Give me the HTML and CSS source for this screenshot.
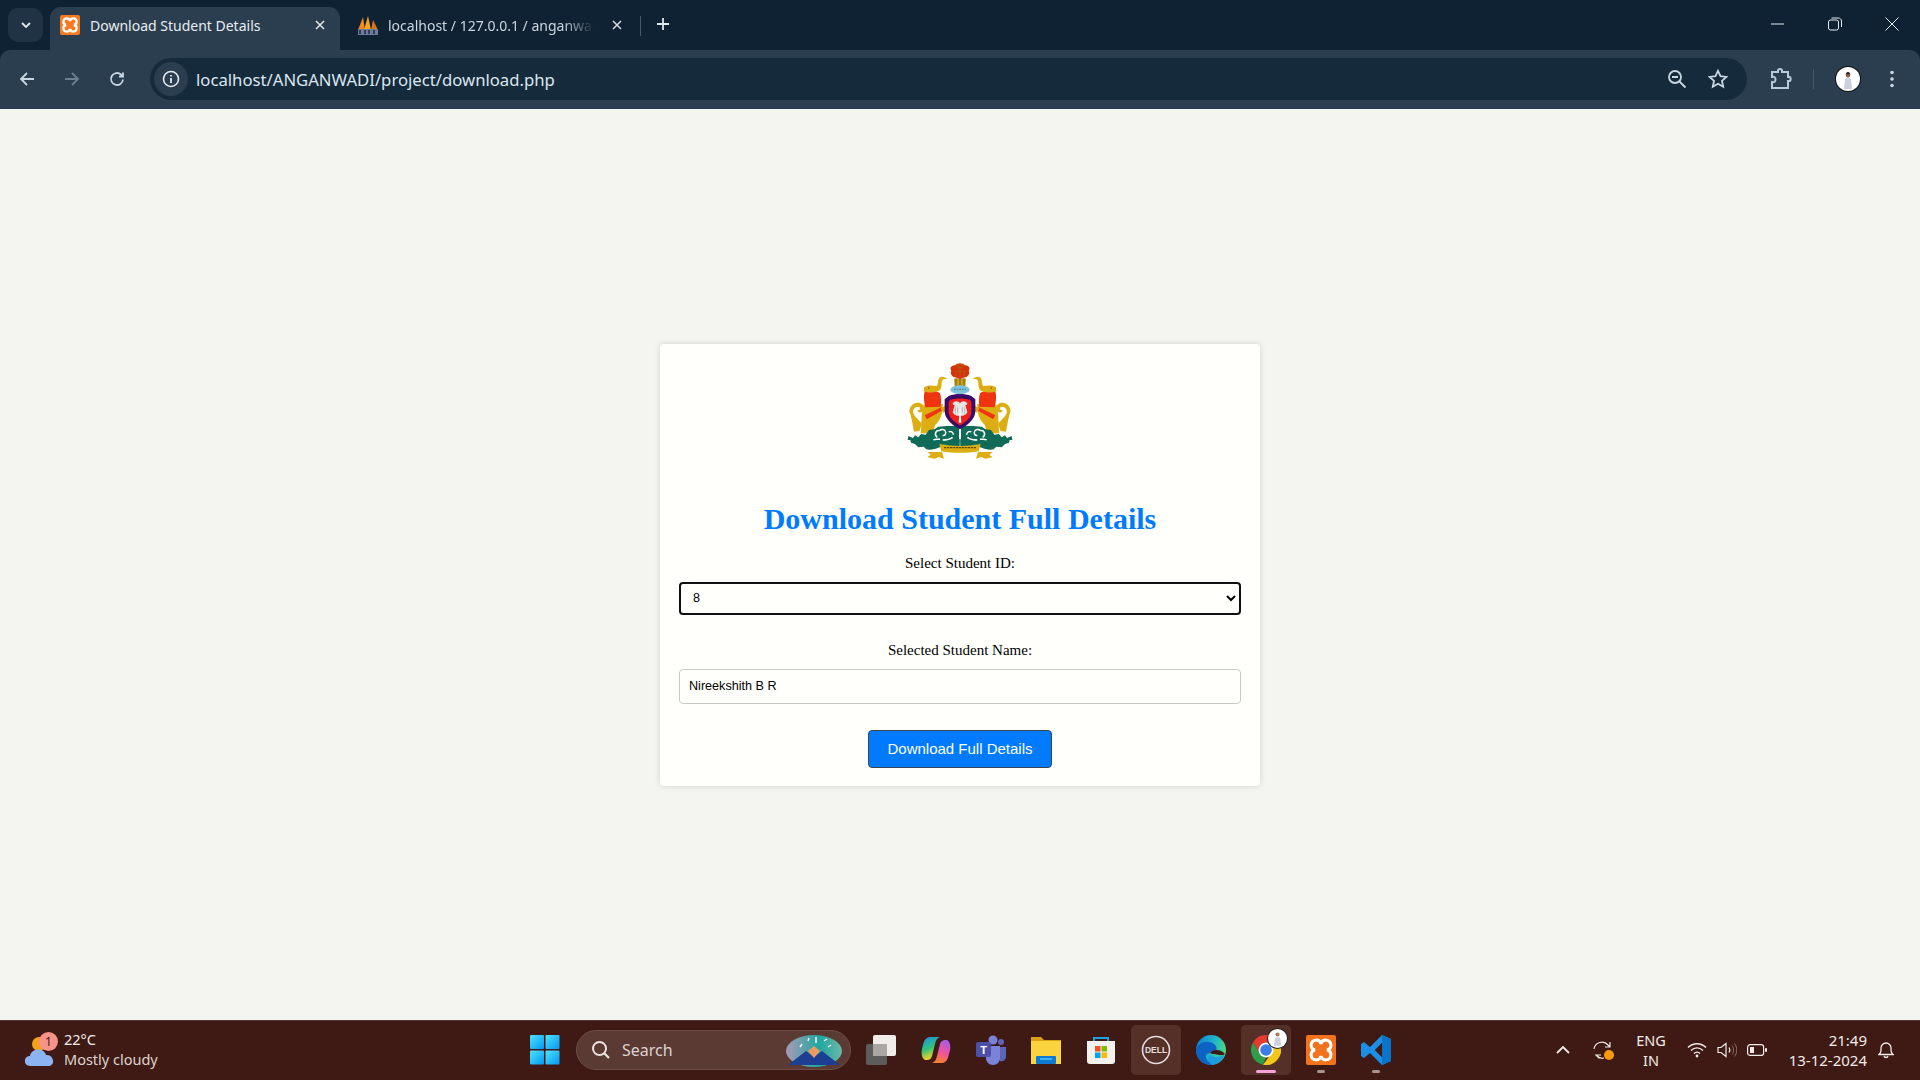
FILE: index.html
```html
<!DOCTYPE html>
<html lang="en">
<head>
    <meta charset="UTF-8">
    <meta name="viewport" content="width=device-width, initial-scale=1.0">
    <title>Download Student Details</title>
    <link rel="stylesheet" href="styles.css">
</head>
<body>
    <header id="browser">
        <div class="tabstrip">
            <button class="tab-search" type="button">
                <svg width="12" height="12" viewBox="0 0 12 12"><path d="M2 4l4 4 4-4" fill="none" stroke="#dfe6ec" stroke-width="1.8"/></svg>
            </button>
            <div class="tab tab-active">
                <svg class="favicon" viewBox="0 0 30 30">
                    <rect width="30" height="30" rx="3" fill="#fb7a1e"/>
                    <path d="M15 9A5 5 0 1 1 21 15A5 5 0 1 1 15 21A5 5 0 1 1 9 15A5 5 0 1 1 15 9z" fill="none" stroke="#fff" stroke-width="3.500"/>
                </svg>
                <span class="tab-title">Download Student Details</span>
                <svg class="tab-close" viewBox="0 0 10 10"><path d="M1 1l8 8M9 1l-8 8" stroke="#e6ebef" stroke-width="1.500"/></svg>
            </div>
            <div class="tab tab-other">
                <svg class="favicon" viewBox="0 0 20 20">
                    <path d="M0 15L5 2l2 13z" fill="#f08a1d"/>
                    <path d="M6 15L10 1l3 14z" fill="#f6a623"/>
                    <path d="M13 15L15 5l5 10z" fill="#d9761a"/>
                    <rect y="14" width="20" height="6" fill="#6d7a99"/>
                    <path d="M2 15v4M7 15v4M11 15v4M16 15v4" stroke="#1d2a44" stroke-width="1.500"/>
                </svg>
                <span class="tab-title tab-title-fade">localhost / 127.0.0.1 / anganwadi</span>
                <svg class="tab-close" viewBox="0 0 10 10"><path d="M1 1l8 8M9 1l-8 8" stroke="#d5dde3" stroke-width="1.500"/></svg>
            </div>
            <span class="tab-sep"></span>
            <svg class="new-tab" viewBox="0 0 14 14"><path d="M7 1v12M1 7h12" stroke="#dfe6ec" stroke-width="1.800"/></svg>
            <div class="window-controls">
                <svg viewBox="0 0 14 14"><path d="M0 7h13" stroke="#e6ebef" stroke-width="1"/></svg>
                <svg viewBox="0 0 14 14"><rect x=".5" y="3" width="10" height="10" rx="2" fill="none" stroke="#e6ebef"/><path d="M3.500 1h7c1.500 0 3 1.500 3 3v6" fill="none" stroke="#e6ebef"/></svg>
                <svg viewBox="0 0 14 14"><path d="M.5.500l13 13M13.500.500l-13 13" stroke="#e6ebef" stroke-width="1"/></svg>
            </div>
        </div>
        <div class="toolbar">
            <svg class="nav-icon" viewBox="0 0 18 18"><path d="M16 9H3M9 3L3 9l6 6" fill="none" stroke="#c8d6e2" stroke-width="1.800"/></svg>
            <svg class="nav-icon" viewBox="0 0 18 18"><path d="M2 9h13M9 3l6 6-6 6" fill="none" stroke="#6c7f8e" stroke-width="1.800"/></svg>
            <svg class="nav-icon" viewBox="0 0 18 18"><path d="M15 9.500A6 6 0 1 1 13 4.500L15 6.500M15 2.500v4h-4" fill="none" stroke="#c8d6e2" stroke-width="1.800"/></svg>
            <div class="omnibox">
                <span class="site-info">
                    <svg width="18" height="18" viewBox="0 0 18 18"><circle cx="9" cy="9" r="7.500" fill="none" stroke="#e3e9ee" stroke-width="1.600"/><path d="M9 8v5M9 5v1.600" stroke="#e3e9ee" stroke-width="1.800"/></svg>
                </span>
                <span class="url">localhost/ANGANWADI/project/download.php</span>
                <svg class="omni-icon omni-zoom" viewBox="0 0 20 20"><circle cx="8" cy="8" r="6" fill="none" stroke="#c8d6e2" stroke-width="1.800"/><path d="M5 8h6M12.500 12.500l6 6" stroke="#c8d6e2" stroke-width="1.800"/></svg>
                <svg class="omni-icon omni-star" viewBox="0 0 20 20"><path d="M10 1.800l2.500 5.400 5.900.7-4.400 4 1.200 5.800-5.200-2.900-5.200 2.900 1.200-5.800-4.400-4 5.900-.7z" fill="none" stroke="#c8d6e2" stroke-width="1.800"/></svg>
            </div>
            <svg class="ext-icon" viewBox="0 0 22 22"><path d="M2 4h6V2.500c0-2 4-2 4 0V4h6v5h1.500c1.500 0 1.500 4 0 4H18v7H2v-6c2.500.5 3.500-.5 3.500-2.500S4.500 8.500 2 9z" fill="none" stroke="#b4cadd" stroke-width="2"/></svg>
            <span class="toolbar-sep"></span>
            <span class="avatar">
                <svg viewBox="0 0 24 24"><circle cx="12" cy="8" r="2.400" fill="#8a5a40"/><path d="M9.800 7c0-2.400 4.400-2.400 4.400 0z" fill="#1e1a1a"/><path d="M8 22l1-10c1-1.500 5-1.500 6 0l1 10z" fill="#c9d2dc"/></svg>
            </span>
            <svg class="menu-icon" viewBox="0 0 4 18"><circle cx="2" cy="2.500" r="1.800" fill="#c8d6e2"/><circle cx="2" cy="9" r="1.800" fill="#c8d6e2"/><circle cx="2" cy="15.500" r="1.800" fill="#c8d6e2"/></svg>
        </div>
    </header>

    <main id="page">
        <div id="container">
            <svg class="emblem" viewBox="60 39 360 300">
                <defs>
                    <g id="emblemBeast">
                        <path d="M92 195c-12-20 8-42 28-36 12 4 14 18 6 26-6 5-14 2-14-5 6 2 10-2 8-7-8-8-24 2-20 16 4 12 18 22 26 32l-8 22-16 2c-4-20-6-34-10-50z" fill="#dcae12"/>
                        <path d="M130 166l58-4c2 20-4 48-22 62l-8 26h-36c4-30 0-56 8-84z" fill="#dcae12"/>
                        <path d="M134 124c18-4 38-2 46 6 4 12 4 26 2 40l-46 2c-4-14-6-34-2-48z" fill="#f03410"/>
                        <path d="M134 196l50-24 2 10-46 26z" fill="#f03410"/>
                        <path d="M132 112c10-8 26-6 38-4 6-6 2-18 8-24 6-6 18-4 24 4-6-2-14-2-16 4-2 10 0 22-8 30-14 6-32 8-46 2z" fill="#dcae12"/>
                        <circle cx="146" cy="114" r="2" fill="#6d4a0a"/>
                        <path d="M182 176c10-6 18-12 24-22l4 12-20 22z" fill="#dcae12"/>
                    </g>
                    <g id="emblemScroll">
                        <path d="M85 258l14 6 6-8 10 6 8-10 14 2 10-14 16-2 12-8 26-2 40 0-2 60c-22 6-40-2-56 2-18 6-30 12-44 8l-8-8-16 2-10-10-12-4-2-8-8 0z" fill="#0f6a58"/>
                        <path d="M172 262c-10-6-6-22 6-20M178 242c6-6 16-4 18 2M196 244c4 8-2 14-8 12M160 270c6-4 14-2 20-2M188 270c10 0 22-2 30-8M206 246c6-4 14 0 14 8" fill="none" stroke="#fffffb" stroke-width="4.500"/>
                        <path d="M142 306h44l6 20-16-5-12 5-22-4 10-8z" fill="#dcae12"/>
                    </g>
                </defs>
                <use href="#emblemBeast"/>
                <use href="#emblemBeast" transform="translate(480 0) scale(-1 1)"/>
                <use href="#emblemScroll"/>
                <use href="#emblemScroll" transform="translate(480 0) scale(-1 1)"/>
                <path d="M178 282c40 8 84 8 124 0l-6 22c-36 6-76 6-112 0z" fill="#dcae12"/>
                <path d="M192 293h96" stroke="#5d4a10" stroke-width="4" stroke-dasharray="7 2"/>
                <path d="M237 232h6v36h-6z" fill="#fffffb"/>
                <path d="M224 112l-2-26h36l-2 26z" fill="#c9a11c"/>
                <path d="M228 84v24M240 84v26M252 84v24" stroke="#7a5a12" stroke-width="3"/>
                <path d="M214 62c-8-10 4-18 12-16 2-8 26-8 28 0 8-2 20 6 12 16 6 8-4 22-14 20-6 6-18 6-24 0-10 2-20-12-14-20z" fill="#d9300c"/>
                <path d="M232 44h16v9h-16zM222 64h36M240 56v26M228 70v10M252 70v10" stroke="#a8660f" stroke-width="3" fill="none"/>
                <ellipse cx="240" cy="119" rx="29" ry="13" fill="#7fc3da"/>
                <path d="M222 118h36" stroke="#4c86a6" stroke-width="4" stroke-dasharray="5 3"/>
                <path d="M206 138c22-8 46-8 68 0l12 10v36c0 24-26 44-46 54-20-10-46-30-46-54v-36z" fill="#3a0b66"/>
                <path d="M210 150c18-6 42-6 60 0l4 6v30c0 18-20 32-34 40-14-8-34-22-34-40v-30z" fill="#ef1f1c"/>
                <path d="M240 160c-4-8-16-8-22 0 0 4 2 6 6 6l-6 20c4 10 14 14 22 10 8 4 18 0 22-10l-6-20c4 0 6-2 6-6-6-8-18-8-22 0z" fill="#e4e4e4"/>
                <path d="M240 160l-4 58h8z" fill="#fffffb"/>
                <path d="M226 172v18M254 172v18M233 172v16M247 172v16" stroke="#a8a8a8" stroke-width="2"/>
            </svg>
            <h2>Download Student Full Details</h2>
            <form id="downloadForm">
                <label for="studentId">Select Student ID:</label>
                <select id="studentId" name="studentId">
                    <option>8</option>
                </select>
                <label for="studentName">Selected Student Name:</label>
                <input id="studentName" name="studentName" type="text" value="Nireekshith B R" readonly>
                <button class="download-btn" type="submit">Download Full Details</button>
            </form>
        </div>
    </main>

    <footer id="taskbar">
        <div class="weather">
            <span class="weather-icon">
                <svg width="34" height="36" viewBox="0 0 34 36">
                    <circle cx="14" cy="12" r="7" fill="#f5a019"/>
                    <path d="M5 34c-7 0-7-10 0-10 1-8 14-9 16-1 8-1 10 11 2 11z" fill="#8db4f2"/>
                </svg>
                <span class="weather-badge">1</span>
            </span>
            <div class="weather-text">
                <span>22°C</span>
                <span class="weather-desc">Mostly cloudy</span>
            </div>
        </div>

        <svg class="win-logo" viewBox="0 0 30 30">
            <defs>
                <linearGradient id="winBlue" x1="0" y1="0" x2="1" y2="1"><stop offset="0" stop-color="#4fe3ff"/><stop offset="1" stop-color="#0597f2"/></linearGradient>
            </defs>
            <rect width="14" height="14" rx="1" fill="url(#winBlue)"/>
            <rect x="15.500" width="14" height="14" rx="1" fill="url(#winBlue)"/>
            <rect y="15.500" width="14" height="14" rx="1" fill="url(#winBlue)"/>
            <rect x="15.500" y="15.500" width="14" height="14" rx="1" fill="url(#winBlue)"/>
        </svg>

        <div class="search-pill">
            <svg width="20" height="20" viewBox="0 0 20 20"><circle cx="8.500" cy="8.500" r="6.500" fill="none" stroke="#e9e4e2" stroke-width="2"/><path d="M13 13l5 5" stroke="#e9e4e2" stroke-width="2.200"/></svg>
            <span class="search-label">Search</span>
            <svg class="search-art" width="56" height="34" viewBox="0 0 56 34">
                <defs>
                    <linearGradient id="artSky" x1="0" y1="0" x2="1" y2="0"><stop offset="0" stop-color="#a99ab8"/><stop offset=".6" stop-color="#1ea79f"/><stop offset="1" stop-color="#6fb7a9"/></linearGradient>
                </defs>
                <ellipse cx="28" cy="18" rx="28" ry="16" fill="url(#artSky)"/>
                <path d="M2 32l18-14 8 6 8-6 18 14z" fill="#1d3f92"/>
                <path d="M22 18l6-5 6 5-6 7z" fill="#ee9a62"/>
                <path d="M14 14l2-3M22 8l1-3M30 10V4M38 8l3-2M42 14l3-2" stroke="#f3f3f3" stroke-width="1.500"/>
            </svg>
        </div>

        <div class="task-icons">
            <span class="task-item">
                <svg viewBox="0 0 30 30"><rect y="9" width="21" height="21" rx="2" fill="#5d5c5b"/><rect x="7" y="0" width="23" height="21" rx="2" fill="#efece9"/><rect x="7" y="9" width="14" height="12" fill="#a9a6a4"/></svg>
            </span>
            <span class="task-item">
                <svg viewBox="0 0 30 30">
                    <defs>
                        <linearGradient id="copA" x1="0" y1="0" x2=".3" y2="1"><stop offset="0" stop-color="#1f8fe8"/><stop offset=".55" stop-color="#2fc27c"/><stop offset="1" stop-color="#f5d327"/></linearGradient>
                        <linearGradient id="copB" x1=".7" y1="0" x2=".4" y2="1"><stop offset="0" stop-color="#a85bea"/><stop offset=".55" stop-color="#f0559a"/><stop offset="1" stop-color="#f5822a"/></linearGradient>
                    </defs>
                    <path d="M9 2h10c-3 1-4 3-5 7l-3 12c-1 3-3 4-5 4H4C0 23 0 16 2 10 3 6 5 2 9 2z" fill="url(#copA)"/>
                    <path d="M21 28H11c3-1 4-3 5-7l3-12c1-3 3-4 5-4h2c4 2 4 9 2 14-1 5-3 9-7 9z" fill="url(#copB)"/>
                </svg>
            </span>
            <span class="task-item">
                <svg viewBox="0 0 30 30">
                    <circle cx="17" cy="5" r="4.500" fill="#7b83d8"/>
                    <circle cx="25" cy="7" r="3" fill="#5e65b8"/>
                    <path d="M21 12h9v9c0 4-3 6-6 5z" fill="#5e65b8"/>
                    <path d="M10 11h14v12c0 4-3 7-7 7s-7-3-7-7z" fill="#7b83d8"/>
                    <rect y="7" width="15" height="15" rx="2" fill="#4b4fa8"/>
                    <text class="teams-t" x="7.500" y="19">T</text>
                </svg>
            </span>
            <span class="task-item">
                <svg viewBox="0 0 30 30">
                    <path d="M0 2h10l3 3h17v8H0z" fill="#d9a213"/>
                    <rect y="6" width="30" height="23" fill="#fbd33f"/>
                    <rect x="5" y="21" width="20" height="8" rx="1" fill="#0f7ad1"/>
                    <rect x="9" y="23" width="12" height="2" fill="#41b2f0"/>
                </svg>
            </span>
            <span class="task-item">
                <svg viewBox="0 0 30 30">
                    <path d="M8 9V3h14v6" fill="none" stroke="#1aa3e4" stroke-width="2"/>
                    <path d="M1 6h28v20c0 2-1 3-3 3H4c-2 0-3-1-3-3z" fill="#f3f1ee"/>
                    <rect x="9" y="11" width="5.500" height="5.500" fill="#f25022"/>
                    <rect x="15.500" y="11" width="5.500" height="5.500" fill="#7fba00"/>
                    <rect x="9" y="17.500" width="5.500" height="5.500" fill="#00a4ef"/>
                    <rect x="15.500" y="17.500" width="5.500" height="5.500" fill="#ffb900"/>
                </svg>
            </span>
            <span class="task-item task-tile">
                <svg viewBox="0 0 30 30">
                    <circle cx="15" cy="15" r="13.500" fill="none" stroke="#e4dedb" stroke-width="1.600"/>
                    <text class="dell-text" x="15" y="18">DELL</text>
                </svg>
            </span>
            <span class="task-item">
                <svg viewBox="0 0 30 30">
                    <defs>
                        <linearGradient id="edgeG" x1="0" y1=".2" x2="1" y2=".5"><stop offset="0" stop-color="#0f7fd6"/><stop offset=".55" stop-color="#1fb4c8"/><stop offset="1" stop-color="#4cdc7e"/></linearGradient>
                    </defs>
                    <circle cx="15" cy="15" r="15" fill="url(#edgeG)"/>
                    <path d="M0 15c1-6 7-9 13-8 6 1 9 5 7 9-3 2-8 1-10 4-1 3 2 7 6 9 2 1-1 1-2 1C6 29 0 23 0 15z" fill="#0d63c4"/>
                    <path d="M14 18c3-4 11-4 15 1-3 2-7 1-10 0-2 0-3 0-5-1z" fill="#3f1a14"/>
                    <path d="M14 20c3 3 9 3 15-1-2 6-7 10-13 11-4-3-4-7-2-10z" fill="#1c9be0"/>
                </svg>
            </span>
            <span class="task-item task-tile task-chrome">
                <svg viewBox="0 0 30 30">
                    <path d="M28 7.500A15 15 0 0 1 12 29.700L19 20.500A7 7 0 0 0 21 11z" fill="#f5c518"/>
                    <path d="M2 7.500L9 18.500A7.500 7.500 0 0 0 15 22.500L12 29.700A15 15 0 0 1 2 7.500z" fill="#2f9e48"/>
                    <path d="M2 7.500A15 15 0 0 1 28 7.500H15A7.500 7.500 0 0 0 8.500 11.250L9 18.500z" fill="#e53a30"/>
                    <circle cx="15" cy="15" r="7.500" fill="#fff"/>
                    <circle cx="15" cy="15" r="5.800" fill="#3b7de8"/>
                </svg>
                <span class="chrome-avatar">
                    <svg viewBox="0 0 24 24"><circle cx="12" cy="7" r="2.600" fill="#a87a5e"/><path d="M7.500 21l1-9c1-2 6-2 7 0l1 9z" fill="#c9d2dc"/></svg>
                </span>
                <span class="indicator indicator-active"></span>
            </span>
            <span class="task-item">
                <svg viewBox="0 0 30 30">
                    <rect width="30" height="30" rx="2" fill="#f2731c"/>
                    <path d="M15 9A5 5 0 1 1 21 15A5 5 0 1 1 15 21A5 5 0 1 1 9 15A5 5 0 1 1 15 9z" fill="none" stroke="#fff" stroke-width="3"/>
                </svg>
                <span class="indicator"></span>
            </span>
            <span class="task-item">
                <svg viewBox="0 0 30 30">
                    <path d="M21 0l9 4v22l-9 4-12-12-6 5-3-2v-12l3-2 6 5zM21 8l-7 7 7 7z" fill="#1b8ee6"/>
                    <path d="M21 0l9 4v22l-9 4z" fill="#0b73c9"/>
                    <path d="M21 8l-7 7 7 7z" fill="#3f1a14"/>
                </svg>
                <span class="indicator"></span>
            </span>
        </div>

        <div class="tray">
            <svg class="tray-chevron" viewBox="0 0 14 8"><path d="M1 7l6-6 6 6" fill="none" stroke="#f1ece9" stroke-width="1.800"/></svg>
            <span class="tray-sync">
                <svg width="20" height="20" viewBox="0 0 20 20"><path d="M1 9a8 8 0 0 1 14-4l2 2M17 2v5h-5M6 18l-3-3h5M3 15c3 3 5 4 8 3" fill="none" stroke="#efe9e6" stroke-width="1.200"/></svg>
                <span class="sync-dot"></span>
            </span>
            <div class="lang"><span>ENG</span><span>IN</span></div>
            <svg class="tray-icon" viewBox="0 0 20 16"><path d="M1 5.500c5-5 13-5 18 0M4 8.500c3.500-3.500 8.500-3.500 12 0M7 11.500c1.800-1.800 4.200-1.800 6 0" fill="none" stroke="#f1ece9" stroke-width="1.400"/><circle cx="10" cy="14" r="1.400" fill="#f1ece9"/></svg>
            <svg class="tray-icon" viewBox="0 0 20 16"><path d="M1 5.500h3L9 1.500v13l-5-4H1z" fill="none" stroke="#f1ece9" stroke-width="1.200"/><path d="M12 5.500c1 1.500 1 3.500 0 5" fill="none" stroke="#f1ece9" stroke-width="1.200"/><path d="M15 3.500c2 2.500 2 6.500 0 9M17.500 1.500c3 3.500 3 9.500 0 13" fill="none" stroke="#8c726a" stroke-width="1"/></svg>
            <svg class="tray-icon" viewBox="0 0 20 12"><rect x=".6" y=".6" width="16" height="10.800" rx="2.500" fill="none" stroke="#f1ece9" stroke-width="1.200"/><rect x="3" y="3" width="4" height="6" fill="#f1ece9"/><rect x="18" y="4" width="2" height="4" rx="1" fill="#f1ece9"/></svg>
            <div class="clock"><span>21:49</span><span>13-12-2024</span></div>
            <svg class="tray-bell" viewBox="0 0 16 18"><path d="M1 13.500c1-1 2-2 2-4V7a5 5 0 0 1 10 0v2.500c0 2 1 3 2 4z" fill="none" stroke="#f1ece9" stroke-width="1.300"/><path d="M6 15c.5 2 3.500 2 4 0" fill="none" stroke="#f1ece9" stroke-width="1.300"/></svg>
        </div>
    </footer>
</body>
</html>
```

FILE: styles.css
```css
* {
    box-sizing: border-box;
}

html, body {
    height: 100%;
}

body {
    margin: 0;
    display: flex;
    flex-direction: column;
    height: 100vh;
    overflow: hidden;
    background-color: #f4f4f0;
    font-family: "Liberation Serif", "Times New Roman", serif;
}

svg {
    display: block;
    flex-shrink: 0;
}

/* browser chrome */
#browser {
    background-color: #0f2233;
    font-family: "Noto Sans", "Open Sans", sans-serif;
}

.tabstrip {
    display: flex;
    align-items: flex-end;
    height: 50px;
    padding-left: 8px;
}

.tab-search {
    display: flex;
    align-items: center;
    justify-content: center;
    width: 35px;
    height: 34px;
    margin-bottom: 8px;
    margin-right: 7px;
    padding: 0;
    border: none;
    border-radius: 10px;
    background-color: #1f3344;
}

.tab {
    display: flex;
    align-items: center;
    height: 43px;
    padding-bottom: 7px;
    font-size: 14px;
}

.tab-active {
    position: relative;
    width: 290px;
    padding-left: 10px;
    padding-right: 15px;
    border-radius: 11px 11px 0 0;
    background-color: #2b3e4f;
    color: #e8edf1;
}

.tab-other {
    width: 300px;
    padding-left: 18px;
    padding-right: 18px;
    color: #ccd6de;
}

.favicon {
    width: 20px;
    height: 20px;
    margin-right: 10px;
}

.tab-title {
    flex: 1;
    overflow: hidden;
    white-space: nowrap;
}

.tab-title-fade {
    -webkit-mask-image: linear-gradient(to right, #000 85%, transparent);
    mask-image: linear-gradient(to right, #000 85%, transparent);
}

.tab-close {
    width: 10px;
    height: 10px;
    margin-left: 18px;
}

.tab-sep {
    width: 1px;
    height: 20px;
    margin-bottom: 14px;
    background-color: #46586a;
}

.new-tab {
    width: 14px;
    height: 14px;
    margin-left: 15px;
    margin-bottom: 19px;
}

.window-controls {
    display: flex;
    gap: 43px;
    margin-left: auto;
    margin-right: 21px;
    margin-bottom: 19px;
}

.window-controls svg {
    width: 14px;
    height: 14px;
}

.toolbar {
    display: flex;
    align-items: center;
    height: 59px;
    padding: 0 18px 1px 18px;
    border-radius: 10px 10px 0 0;
    background-color: #2b3e4f;
}

.nav-icon {
    width: 18px;
    height: 18px;
    margin-right: 27px;
}

.nav-icon:nth-child(3) {
    margin-right: 24px;
}

.omnibox {
    display: flex;
    align-items: center;
    width: 1597px;
    height: 42px;
    padding-left: 4px;
    border-radius: 21px;
    background-color: #152a3b;
}

.site-info {
    display: flex;
    align-items: center;
    justify-content: center;
    width: 34px;
    height: 34px;
    border-radius: 50%;
    background-color: #2b3e4f;
}

.url {
    margin-left: 8px;
    font-size: 16.700px;
    color: #dbe6ef;
}

.omni-icon {
    width: 20px;
    height: 20px;
}

.omni-zoom {
    margin-left: auto;
}

.omni-star {
    margin-left: 21px;
    margin-right: 19px;
}

.ext-icon {
    width: 22px;
    height: 22px;
    margin-left: 23px;
}

.toolbar-sep {
    width: 1px;
    height: 20px;
    margin-left: 21px;
    background-color: #46586a;
}

.avatar {
    width: 24px;
    height: 24px;
    margin-left: 22px;
    border-radius: 50%;
    background-color: #fff;
    box-shadow: 0 0 0 1px #111;
}

.menu-icon {
    width: 4px;
    height: 18px;
    margin-left: 30px;
}

/* page */
#page {
    flex: 1;
    display: flex;
    justify-content: center;
    align-items: center;
}

#container {
    width: 600px;
    padding: 19px 19px 18px;
    border-radius: 4px;
    background-color: #fffffb;
    box-shadow: 0 0 6px rgba(0, 0, 0, 0.14);
    text-align: center;
}

.emblem {
    width: 120px;
    height: 100px;
    margin: 0 auto;
}

h2 {
    margin: 39px 0 19px;
    font-size: 30px;
    line-height: 34px;
    color: #007bff;
}

#downloadForm label {
    display: block;
    margin-bottom: 10px;
    font-size: 15px;
    line-height: 17px;
    color: #000;
}

#studentId {
    display: block;
    width: 100%;
    height: 33px;
    margin-bottom: 27px;
    padding: 0 8px;
    border: 2px solid #101010;
    border-radius: 4px;
    background-color: #fffffb;
    font-family: "Liberation Sans", Arial, sans-serif;
    font-size: 12.600px;
}

#studentName {
    display: block;
    width: 100%;
    height: 35px;
    margin-bottom: 26px;
    padding: 0 9px;
    border: 1px solid #c8c8c6;
    border-radius: 4px;
    background-color: #fffffb;
    font-family: "Liberation Sans", Arial, sans-serif;
    font-size: 12.600px;
    outline: none;
}

.download-btn {
    display: block;
    width: 184px;
    height: 38px;
    margin: 0 auto;
    border: 1px solid #3a4652;
    border-radius: 4px;
    background-color: #007bff;
    color: #fff;
    font-family: "Liberation Sans", Arial, sans-serif;
    font-size: 15px;
    cursor: pointer;
}

/* taskbar */
#taskbar {
    display: flex;
    align-items: center;
    height: 60px;
    padding-left: 25px;
    padding-bottom: 2px;
    border-top: 1px solid #56352e;
    background-color: #3f1a14;
    color: #f1ece9;
    font-family: "Noto Sans", "Open Sans", sans-serif;
    font-size: 14.500px;
}

.weather {
    display: flex;
    align-items: center;
    width: 505px;
}

.weather-icon {
    position: relative;
    width: 34px;
    height: 36px;
    margin-right: 5px;
}

.weather-badge {
    position: absolute;
    top: 0;
    left: 14px;
    width: 19px;
    height: 19px;
    border-radius: 50%;
    background-color: #f7928a;
    color: #3f1a14;
    font-size: 12px;
    line-height: 19px;
    text-align: center;
}

.weather-text {
    display: flex;
    flex-direction: column;
    margin-bottom: 1px;
    line-height: 20px;
}

.weather-desc {
    color: #dcd3cf;
}

.win-logo {
    width: 30px;
    height: 30px;
}

.search-pill {
    display: flex;
    align-items: center;
    width: 275px;
    height: 40px;
    margin-left: 16px;
    padding-left: 14px;
    border: 1px solid #6d4d45;
    border-radius: 20px;
    background-color: #5b3a33;
}

.search-label {
    margin-left: 11px;
    font-size: 16px;
    color: #dcd3cf;
}

.search-art {
    margin-left: auto;
    margin-right: 8px;
}

.task-icons {
    display: flex;
    align-items: center;
    gap: 5px;
    margin-left: 5px;
}

.task-item {
    position: relative;
    display: flex;
    align-items: center;
    justify-content: center;
    width: 50px;
    height: 50px;
}

.task-item svg {
    width: 30px;
    height: 30px;
}

.task-tile {
    border-radius: 5px;
    background-color: #553029;
}

.teams-t {
    fill: #fff;
    font-family: "Liberation Sans", Arial, sans-serif;
    font-size: 11px;
    font-weight: bold;
    text-anchor: middle;
}

.dell-text {
    fill: #e4dedb;
    font-family: "Liberation Sans", Arial, sans-serif;
    font-size: 8.500px;
    font-weight: bold;
    text-anchor: middle;
}

.chrome-avatar {
    position: absolute;
    top: 4px;
    right: 4px;
    width: 19px;
    height: 19px;
    border-radius: 50%;
    background-color: #fff;
    box-shadow: 0 0 0 1px #222;
}

.chrome-avatar svg {
    width: 19px;
    height: 19px;
}

.indicator {
    position: absolute;
    left: 21px;
    bottom: 2px;
    width: 8px;
    height: 3px;
    border-radius: 2px;
    background-color: #a89490;
}

.indicator-active {
    left: 15px;
    width: 20px;
    background-color: #f7a3d6;
}

.tray {
    display: flex;
    align-items: center;
    margin-left: 155px;
}

.tray-chevron {
    width: 14px;
    height: 8px;
}

.tray-sync {
    position: relative;
    width: 20px;
    height: 20px;
    margin-left: 23px;
}

.sync-dot {
    position: absolute;
    right: -1px;
    bottom: 0;
    width: 10px;
    height: 10px;
    border-radius: 50%;
    background-color: #f79a0c;
}

.lang {
    display: flex;
    flex-direction: column;
    width: 40px;
    margin-left: 18px;
    line-height: 20px;
    text-align: center;
}

.tray-icon {
    width: 20px;
    height: 16px;
    margin-left: 10px;
}

.lang + .tray-icon {
    margin-left: 16px;
}

.clock {
    display: flex;
    flex-direction: column;
    width: 92px;
    margin-left: 8px;
    font-size: 15px;
    line-height: 20px;
    text-align: right;
}

.tray-bell {
    width: 16px;
    height: 18px;
    margin-left: 11px;
}
```
